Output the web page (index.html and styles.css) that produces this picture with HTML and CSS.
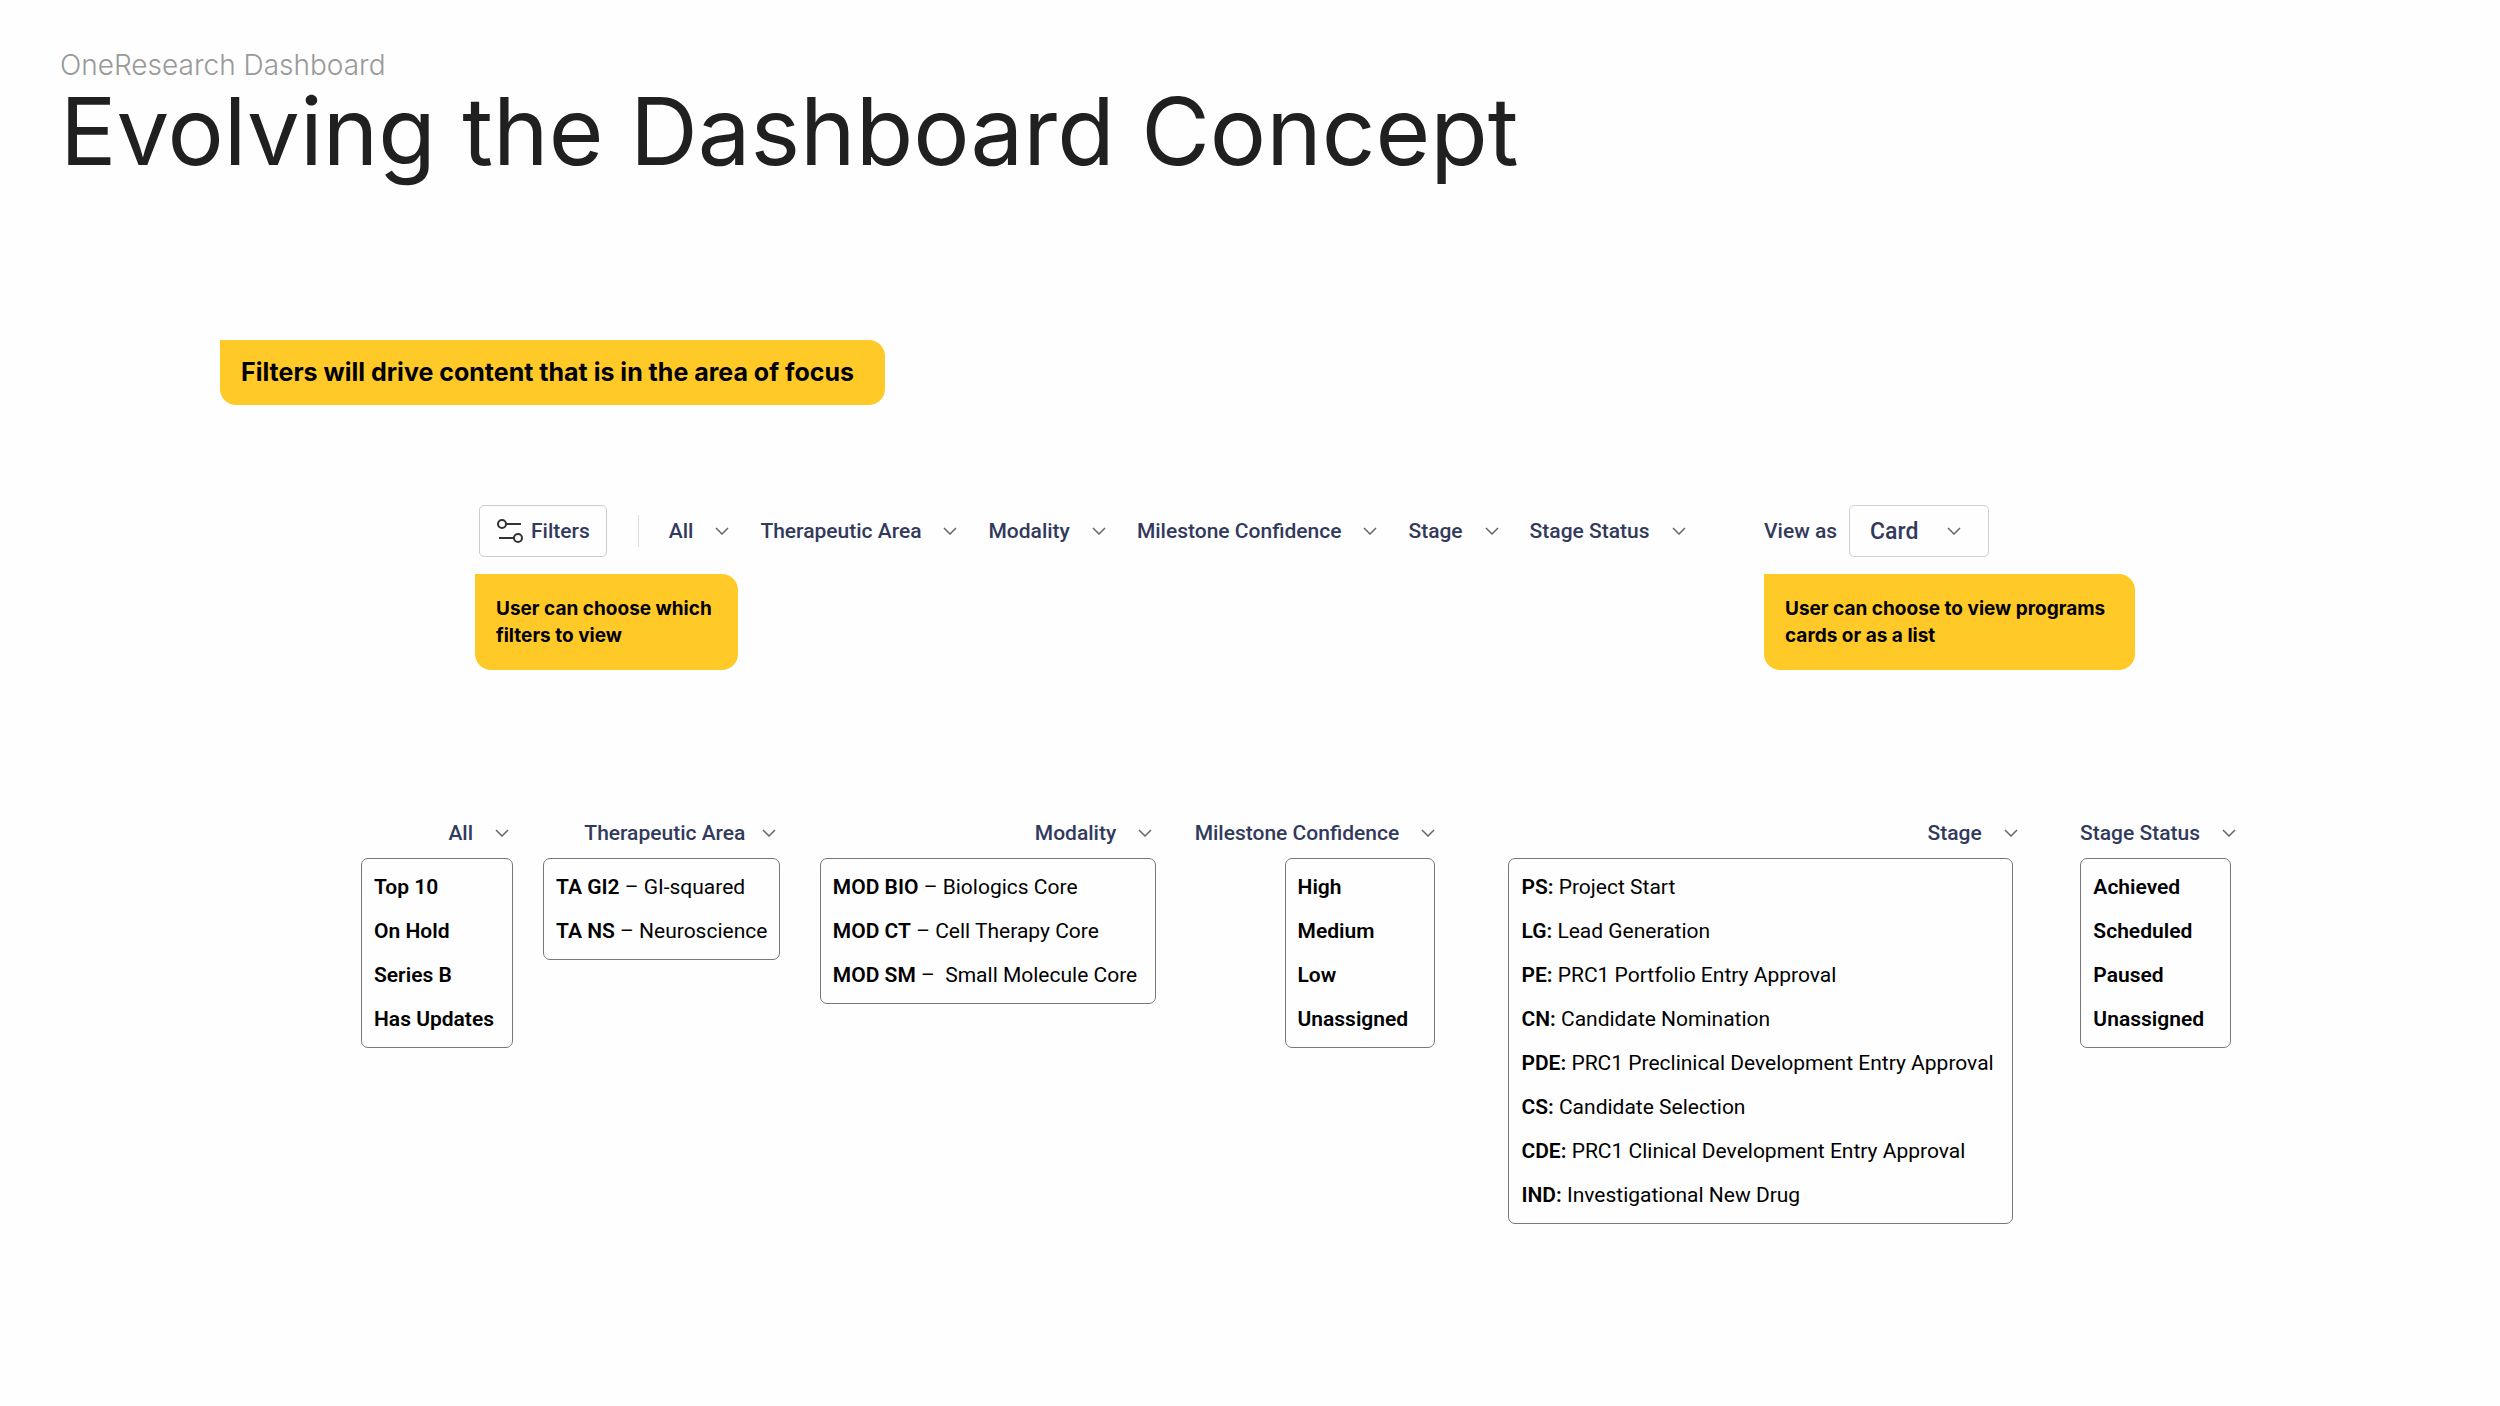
FILE: index.html
```html
<!DOCTYPE html>
<html lang="en">
<head>
<meta charset="UTF-8">
<meta name="viewport" content="width=device-width, initial-scale=1.0">
<title>Evolving the Dashboard Concept</title>
<link rel="stylesheet" href="styles.css">
</head>
<body>

<!-- shared icons -->
<svg class="sprite" aria-hidden="true">
  <symbol id="chevron" viewBox="0 0 14 8">
    <path d="M1 1l6 6 6-6" fill="none" stroke="currentColor" stroke-width="1.5"/>
  </symbol>
  <symbol id="sliders" viewBox="0 0 26 24">
    <g fill="none" stroke="currentColor" stroke-width="2">
      <circle cx="5" cy="5" r="4"/>
      <path d="M9 5h15M2 19h15"/>
      <circle cx="21" cy="19" r="4"/>
    </g>
  </symbol>
</svg>

<header class="page-header">
  <p class="eyebrow">OneResearch Dashboard</p>
  <h1>Evolving the Dashboard Concept</h1>
</header>

<main>
  <p class="note note-large">Filters will drive content that is in the area of focus</p>

  <!-- filter bar -->
  <section class="toolbar">
    <div class="toolbar-group">
      <div class="bar">
        <button class="filters-button" type="button"><svg class="sliders"><use href="#sliders"/></svg>Filters</button>
        <nav class="menus" aria-label="Filters">
          <button class="menu" type="button">All<svg class="chevron"><use href="#chevron"/></svg></button>
          <button class="menu" type="button">Therapeutic Area<svg class="chevron"><use href="#chevron"/></svg></button>
          <button class="menu" type="button">Modality<svg class="chevron"><use href="#chevron"/></svg></button>
          <button class="menu" type="button">Milestone Confidence<svg class="chevron"><use href="#chevron"/></svg></button>
          <button class="menu" type="button">Stage<svg class="chevron"><use href="#chevron"/></svg></button>
          <button class="menu" type="button">Stage Status<svg class="chevron"><use href="#chevron"/></svg></button>
        </nav>
      </div>
      <p class="note note-filters">User can choose which<br>filters to view</p>
    </div>

    <div class="toolbar-group">
      <div class="bar view-bar">
        <label for="view">View as</label>
        <div class="select">
          <select id="view">
            <option>Card</option>
            <option>List</option>
          </select>
          <svg class="chevron"><use href="#chevron"/></svg>
        </div>
      </div>
      <p class="note note-view">User can choose to view programs<br>cards or as a list</p>
    </div>
  </section>

  <!-- options in each filter -->
  <section class="options">
    <div class="option inset">
      <button class="menu" type="button">All<svg class="chevron"><use href="#chevron"/></svg></button>
      <ul>
        <li><b>Top 10</b></li>
        <li><b>On Hold</b></li>
        <li><b>Series B</b></li>
        <li><b>Has Updates</b></li>
      </ul>
    </div>
    <div class="option inset tight">
      <button class="menu" type="button">Therapeutic Area<svg class="chevron"><use href="#chevron"/></svg></button>
      <ul>
        <li><b>TA GI2</b> – GI-squared</li>
        <li><b>TA NS</b> – Neuroscience</li>
      </ul>
    </div>
    <div class="option inset">
      <button class="menu" type="button">Modality<svg class="chevron"><use href="#chevron"/></svg></button>
      <ul>
        <li><b>MOD BIO</b> – Biologics Core</li>
        <li><b>MOD CT</b> – Cell Therapy Core</li>
        <li><b>MOD SM</b> – &nbsp;Small Molecule Core</li>
      </ul>
    </div>
    <div class="option roomy">
      <button class="menu" type="button">Milestone Confidence<svg class="chevron"><use href="#chevron"/></svg></button>
      <ul>
        <li><b>High</b></li>
        <li><b>Medium</b></li>
        <li><b>Low</b></li>
        <li><b>Unassigned</b></li>
      </ul>
    </div>
    <div class="option outset">
      <button class="menu" type="button">Stage<svg class="chevron"><use href="#chevron"/></svg></button>
      <ul>
        <li><b>PS:</b> Project Start</li>
        <li><b>LG:</b> Lead Generation</li>
        <li><b>PE:</b> PRC1 Portfolio Entry Approval</li>
        <li><b>CN:</b> Candidate Nomination</li>
        <li><b>PDE:</b> PRC1 Preclinical Development Entry Approval</li>
        <li><b>CS:</b> Candidate Selection</li>
        <li><b>CDE:</b> PRC1 Clinical Development Entry Approval</li>
        <li><b>IND:</b> Investigational New Drug</li>
      </ul>
    </div>
    <div class="option outset roomy">
      <button class="menu" type="button">Stage Status<svg class="chevron"><use href="#chevron"/></svg></button>
      <ul>
        <li><b>Achieved</b></li>
        <li><b>Scheduled</b></li>
        <li><b>Paused</b></li>
        <li><b>Unassigned</b></li>
      </ul>
    </div>
  </section>
</main>

</body>
</html>
```
FILE: styles.css
```css
* {
  box-sizing: border-box;
}
body {
  margin: 0;
  background: #fefefe;
  color: #000;
  font-family: Roboto, sans-serif;
  font-size: 21px;
}
h1, p, ul {
  margin: 0;
  padding: 0;
}
button, select {
  font: inherit;
  color: inherit;
  background: none;
  border: none;
  padding: 0;
  cursor: pointer;
}
.sprite {
  display: none;
}
.page-header {
  padding: 48px 60px 0;
  font-family: Inter, sans-serif;
}
.eyebrow {
  font-size: 28px;
  line-height: 34px;
  font-weight: 300;
  color: #999;
}
h1 {
  font-size: 94px;
  line-height: 98px;
  font-weight: 400;
  color: #202020;
}

/* yellow notes */
.note {
  width: fit-content;
  padding: 21px;
  background: #ffc928;
  border-radius: 0 16px 16px 16px;
  font-family: Inter, sans-serif;
  font-size: 19px;
  line-height: 27px;
  font-weight: 700;
}
.note-large {
  min-width: 665px;
  margin: 160px 0 0 220px;
  padding: 16px 21px;
  font-size: 25px;
  line-height: 33px;
}
.note-filters {
  min-width: 263px;
}
.note-view {
  min-width: 371px;
}

/* filter bar */
.toolbar {
  display: flex;
  justify-content: space-between;
  padding: 100px 365px 0 475px;
}
.bar {
  display: flex;
  align-items: center;
  height: 52px;
  margin-bottom: 17px;
  color: #323a5c;
  font-weight: 500;
}
.toolbar-group:first-child .bar {
  margin-left: 4px;
}
.filters-button {
  display: flex;
  align-items: center;
  gap: 8px;
  height: 52px;
  padding: 0 16px 0 17px;
  border: 1px solid #ccc;
  border-radius: 5px;
}
.sliders {
  width: 26px;
  height: 24px;
  color: #333;
}
.menus {
  display: flex;
  align-items: center;
  gap: 31px;
  height: 32px;
  margin-left: 31px;
  padding-left: 30px;
  border-left: 1px solid #ddd;
}
.menu {
  display: flex;
  align-items: center;
  gap: 22px;
  color: #323a5c;
  font-weight: 500;
  line-height: 26px;
  white-space: nowrap;
}
.chevron {
  width: 14px;
  height: 8px;
  color: #666;
}
.view-bar {
  gap: 12px;
}
.select {
  position: relative;
}
.select select {
  width: 140px;
  height: 52px;
  padding-left: 20px;
  border: 1px solid #ccd2d4;
  border-radius: 5px;
  font-size: 23px;
  appearance: none;
}
.select .chevron {
  position: absolute;
  top: 22px;
  right: 28px;
  pointer-events: none;
}

/* option lists */
.options {
  display: grid;
  grid-template-columns: 152fr 247fr 345fr 284fr 542fr 154fr;
  gap: 30px;
  justify-items: start;
  align-items: start;
  padding: 150px 266px 60px 361px;
}
.option {
  display: flex;
  flex-direction: column;
  align-items: flex-end;
}
.option .menu {
  margin-bottom: 12px;
}
.option.inset .menu {
  margin-right: 4px;
}
.option.outset .menu {
  margin-right: -5px;
}
.option.tight .menu {
  gap: 17px;
}
.option ul {
  padding: 6px 18px 6px 12px;
  border: 1px solid #777;
  border-radius: 7px;
  list-style: none;
  line-height: 44px;
  white-space: nowrap;
}
.option.tight ul {
  padding-right: 12px;
}
.option.roomy ul {
  padding-right: 26px;
}
.option b {
  font-weight: 600;
}
```
